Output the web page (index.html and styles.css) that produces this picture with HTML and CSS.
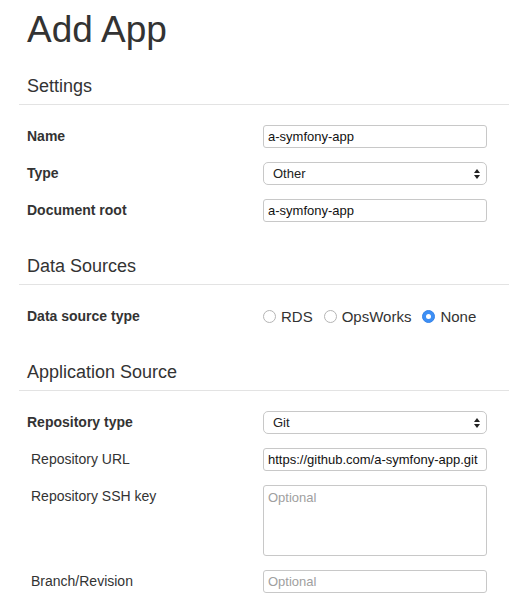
FILE: index.html
```html
<!DOCTYPE html>
<html lang="en">
<head>
    <meta charset="UTF-8">
    <title>Add App</title>
    <link rel="stylesheet" href="styles.css">
</head>
<body>
    <div class="page">
        <h1 class="title">Add App</h1>

        <h2 class="section-head">Settings</h2>
        <div class="row">
            <label class="label">Name</label>
            <input class="control" type="text" value="a-symfony-app">
        </div>
        <div class="row">
            <label class="label">Type</label>
            <div class="select-wrap">
                <select class="control select"><option>Other</option></select>
                <svg class="arrows" width="8" height="12" viewBox="0 0 8 12"><path d="M4 1 L7 5 L1 5 Z M4 11 L7 7 L1 7 Z" fill="#222"/></svg>
            </div>
        </div>
        <div class="row">
            <label class="label">Document root</label>
            <input class="control" type="text" value="a-symfony-app">
        </div>

        <h2 class="section-head">Data Sources</h2>
        <div class="row">
            <label class="label">Data source type</label>
            <div class="radios">
                <label class="radio"><input type="radio" name="ds"> RDS</label>
                <label class="radio"><input type="radio" name="ds"> OpsWorks</label>
                <label class="radio"><input type="radio" name="ds" checked> None</label>
            </div>
        </div>

        <h2 class="section-head">Application Source</h2>
        <div class="row">
            <label class="label">Repository type</label>
            <div class="select-wrap">
                <select class="control select"><option>Git</option></select>
                <svg class="arrows" width="8" height="12" viewBox="0 0 8 12"><path d="M4 1 L7 5 L1 5 Z M4 11 L7 7 L1 7 Z" fill="#222"/></svg>
            </div>
        </div>
        <div class="row">
            <label class="label sub">Repository URL</label>
            <input class="control" type="text" value="https://github.com/a-symfony-app.git">
        </div>
        <div class="row top">
            <label class="label sub">Repository SSH key</label>
            <textarea class="control area" placeholder="Optional"></textarea>
        </div>
        <div class="row">
            <label class="label sub">Branch/Revision</label>
            <input class="control" type="text" placeholder="Optional">
        </div>
    </div>
</body>
</html>
```

FILE: styles.css
```css
* {
    margin: 0;
    padding: 0;
    box-sizing: border-box;
}

body {
    font-family: "Liberation Sans", Arial, sans-serif;
    color: #333;
    background: #fff;
}

.page {
    padding: 10px 0 0 19px;
}

/* Page title */
.title {
    font-size: 37px;
    line-height: 40px;
    font-weight: normal;
    padding-left: 8px;
    color: #333;
}

/* Section headings with rule */
.section-head {
    font-size: 18px;
    line-height: 20px;
    font-weight: normal;
    padding: 0 0 8px 8px;
    border-bottom: 1px solid #e3e3e3;
    margin-top: 34px;
    margin-bottom: 20px;
}

.title + .section-head {
    margin-top: 26px;
}

/* Form rows */
.row {
    display: flex;
    align-items: center;
    padding-left: 8px;
    margin-bottom: 14px;
    height: 23px;
}

.row.top {
    align-items: flex-start;
    height: auto;
}

.label {
    width: 236px;
    font-size: 14px;
    font-weight: bold;
    line-height: 23px;
    flex-shrink: 0;
}

.label.sub {
    font-weight: normal;
    padding-left: 4px;
}

.control {
    width: 224px;
    height: 23px;
    border: 1px solid #c8c8c8;
    border-radius: 3px;
    font-family: "Liberation Sans", Arial, sans-serif;
    font-size: 13px;
    color: #111;
    padding: 0 4px;
    background: #fff;
    outline: none;
}

.control::placeholder {
    color: #a0a0a0;
}

.area {
    height: 71px;
    padding: 4px 4px;
    resize: none;
    line-height: 15px;
}

/* Select box */
.select-wrap {
    position: relative;
    width: 224px;
}

.select {
    appearance: none;
    -webkit-appearance: none;
    border-radius: 5px;
    padding-left: 9px;
    color: #222;
}

.arrows {
    position: absolute;
    right: 6px;
    top: 6px;
    pointer-events: none;
}

/* Radio buttons */
.radios {
    display: flex;
    align-items: center;
    gap: 11px;
}

.radio {
    display: flex;
    align-items: center;
    gap: 5px;
    font-size: 15px;
    line-height: 23px;
    color: #333;
}

.radio input {
    appearance: none;
    -webkit-appearance: none;
    width: 13px;
    height: 13px;
    border: 1px solid #b5b5b5;
    border-radius: 50%;
    background: #fff;
    position: relative;
    margin: 0;
}

.radio input:checked {
    background: #3d8ff5;
    border-color: #3583e8;
}

.radio input:checked::after {
    content: "";
    position: absolute;
    width: 5px;
    height: 5px;
    border-radius: 50%;
    background: #fff;
    left: 3px;
    top: 3px;
}
```
